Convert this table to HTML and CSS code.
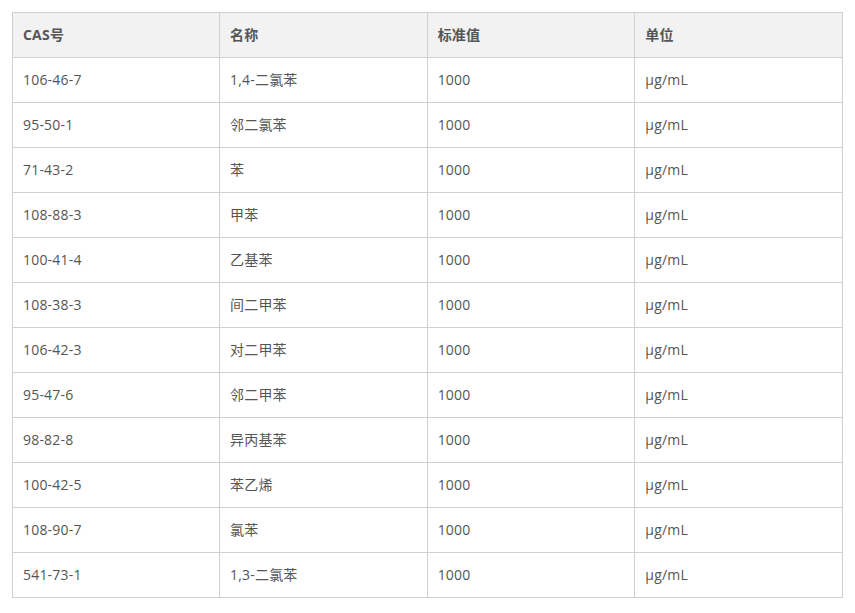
FILE: index.html
```html
<!DOCTYPE html>
<html lang="zh">
<head>
<meta charset="utf-8">
<link rel="stylesheet" href="styles.css">
</head>
<body>
<table class="data">
<thead>
<tr><th>CAS号</th><th>名称</th><th>标准值</th><th>单位</th></tr>
</thead>
<tbody>
<tr><td>106-46-7</td><td>1,4-二氯苯</td><td>1000</td><td>μg/mL</td></tr>
<tr><td>95-50-1</td><td>邻二氯苯</td><td>1000</td><td>μg/mL</td></tr>
<tr><td>71-43-2</td><td>苯</td><td>1000</td><td>μg/mL</td></tr>
<tr><td>108-88-3</td><td>甲苯</td><td>1000</td><td>μg/mL</td></tr>
<tr><td>100-41-4</td><td>乙基苯</td><td>1000</td><td>μg/mL</td></tr>
<tr><td>108-38-3</td><td>间二甲苯</td><td>1000</td><td>μg/mL</td></tr>
<tr><td>106-42-3</td><td>对二甲苯</td><td>1000</td><td>μg/mL</td></tr>
<tr><td>95-47-6</td><td>邻二甲苯</td><td>1000</td><td>μg/mL</td></tr>
<tr><td>98-82-8</td><td>异丙基苯</td><td>1000</td><td>μg/mL</td></tr>
<tr><td>100-42-5</td><td>苯乙烯</td><td>1000</td><td>μg/mL</td></tr>
<tr><td>108-90-7</td><td>氯苯</td><td>1000</td><td>μg/mL</td></tr>
<tr><td>541-73-1</td><td>1,3-二氯苯</td><td>1000</td><td>μg/mL</td></tr>
</tbody>
</table>
</body>
</html>
```
FILE: styles.css
```css
html, body {
  margin: 0;
  padding: 0;
  background: #fff;
}
body {
  padding: 12px;
  font-family: "Open Sans", "Noto Sans CJK SC", sans-serif;
  font-size: 14px;
  color: #555;
}
.data {
  border-collapse: collapse;
  width: 831px;
  table-layout: fixed;
}
.data th,
.data td {
  border: 1px solid #d0d0d0;
  height: 45px;
  padding: 0 10px;
  text-align: left;
  vertical-align: middle;
  box-sizing: border-box;
  line-height: 20px;
  letter-spacing: 0.2px;
}
.data th {
  background: #f2f2f2;
  font-weight: bold;
  color: #555;
}
.data th:first-child, .data td:first-child { width: 207px; }
```
